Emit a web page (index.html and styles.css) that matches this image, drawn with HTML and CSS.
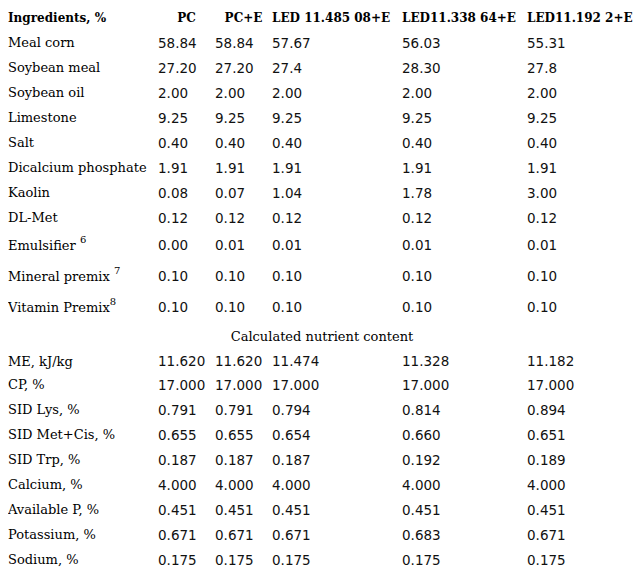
FILE: index.html
```html
<!DOCTYPE html>
<html>
<head>
<meta charset="utf-8">
<link rel="stylesheet" href="styles.css">
</head>
<body>
<table class="diet">
  <colgroup>
    <col class="c-label"><col class="c-pc"><col class="c-pce"><col class="c-led1"><col class="c-led2"><col class="c-led3">
  </colgroup>
  <thead>
    <tr class="head">
      <th class="h-label">Ingredients, %</th>
      <th class="h-c">PC</th>
      <th class="h-c">PC+E</th>
      <th class="h-l">LED 11.485 08+E</th>
      <th class="h-l">LED11.338 64+E</th>
      <th class="h-l">LED11.192 2+E</th>
    </tr>
  </thead>
  <tbody>
    <tr><td class="lab">Meal corn</td><td>58.84</td><td>58.84</td><td>57.67</td><td>56.03</td><td>55.31</td></tr>
    <tr><td class="lab">Soybean meal</td><td>27.20</td><td>27.20</td><td>27.4</td><td>28.30</td><td>27.8</td></tr>
    <tr><td class="lab">Soybean oil</td><td>2.00</td><td>2.00</td><td>2.00</td><td>2.00</td><td>2.00</td></tr>
    <tr><td class="lab">Limestone</td><td>9.25</td><td>9.25</td><td>9.25</td><td>9.25</td><td>9.25</td></tr>
    <tr><td class="lab">Salt</td><td>0.40</td><td>0.40</td><td>0.40</td><td>0.40</td><td>0.40</td></tr>
    <tr><td class="lab">Dicalcium phosphate</td><td>1.91</td><td>1.91</td><td>1.91</td><td>1.91</td><td>1.91</td></tr>
    <tr><td class="lab">Kaolin</td><td>0.08</td><td>0.07</td><td>1.04</td><td>1.78</td><td>3.00</td></tr>
    <tr><td class="lab">DL-Met</td><td>0.12</td><td>0.12</td><td>0.12</td><td>0.12</td><td>0.12</td></tr>
    <tr class="r-emul"><td class="lab">Emulsifier <sup>6</sup></td><td>0.00</td><td>0.01</td><td>0.01</td><td>0.01</td><td>0.01</td></tr>
    <tr class="r-min"><td class="lab">Mineral premix <sup>7</sup></td><td>0.10</td><td>0.10</td><td>0.10</td><td>0.10</td><td>0.10</td></tr>
    <tr class="r-vit"><td class="lab">Vitamin Premix<sup>8</sup></td><td>0.10</td><td>0.10</td><td>0.10</td><td>0.10</td><td>0.10</td></tr>
    <tr class="r-calc"><td class="section" colspan="6">Calculated nutrient content</td></tr>
    <tr class="r-me"><td class="lab">ME, kJ/kg</td><td>11.620</td><td>11.620</td><td>11.474</td><td>11.328</td><td>11.182</td></tr>
    <tr><td class="lab">CP, %</td><td>17.000</td><td>17.000</td><td>17.000</td><td>17.000</td><td>17.000</td></tr>
    <tr><td class="lab">SID Lys, %</td><td>0.791</td><td>0.791</td><td>0.794</td><td>0.814</td><td>0.894</td></tr>
    <tr><td class="lab">SID Met+Cis, %</td><td>0.655</td><td>0.655</td><td>0.654</td><td>0.660</td><td>0.651</td></tr>
    <tr><td class="lab">SID Trp, %</td><td>0.187</td><td>0.187</td><td>0.187</td><td>0.192</td><td>0.189</td></tr>
    <tr><td class="lab">Calcium, %</td><td>4.000</td><td>4.000</td><td>4.000</td><td>4.000</td><td>4.000</td></tr>
    <tr><td class="lab">Available P, %</td><td>0.451</td><td>0.451</td><td>0.451</td><td>0.451</td><td>0.451</td></tr>
    <tr><td class="lab">Potassium, %</td><td>0.671</td><td>0.671</td><td>0.671</td><td>0.683</td><td>0.671</td></tr>
    <tr><td class="lab">Sodium, %</td><td>0.175</td><td>0.175</td><td>0.175</td><td>0.175</td><td>0.175</td></tr>
  </tbody>
</table>
</body>
</html>
```

FILE: styles.css
```css
html, body {
  background: #ffffff;
}
body {
  margin: 8px;
  color: #000000;
  font-family: "DejaVu Serif", "Liberation Serif", serif;
}
.diet {
  table-layout: fixed;
  border-collapse: collapse;
  width: 628px;
}
.c-label { width: 150px; }
.c-pc { width: 57px; }
.c-pce { width: 57px; }
.c-led1 { width: 130px; }
.c-led2 { width: 125px; }
.c-led3 { width: 109px; }

.diet th, .diet td {
  padding: 0;
  white-space: nowrap;
  vertical-align: middle;
}
.head th {
  height: 22px;
  font-family: "DejaVu Serif", serif;
  font-weight: bold;
  font-size: 12px;
  vertical-align: top;
  padding-top: 3px;
  box-sizing: border-box;
}
.h-label { text-align: left; }
.h-c { text-align: center; padding-right: 8px; }
.h-l { text-align: left; }

.diet td {
  height: 25px;
  font-family: "DejaVu Sans", sans-serif;
  font-size: 13.5px;
  font-weight: normal;
  text-align: left;
  color: #111111;
}
.diet td.lab {
  font-family: "DejaVu Serif", serif;
  font-size: 13px;
  color: #000000;
}
.diet td.section {
  font-family: "DejaVu Serif", serif;
  font-size: 13px;
  text-align: center;
  color: #000000;
}
.lab sup {
  font-size: 10px;
  vertical-align: 7px;
  line-height: 0;
}
.r-emul td { height: 30px; }
.r-min td { height: 32px; }
.r-vit td { height: 30px; }
.r-calc td { height: 28px; }
.r-me td { height: 22px; }
```
